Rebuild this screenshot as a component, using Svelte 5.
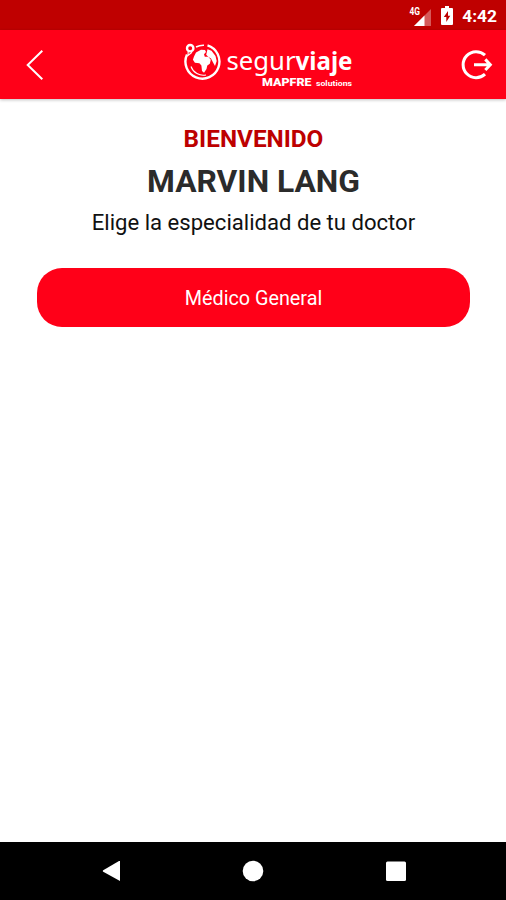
<script>
  export let name = 'MARVIN LANG';
  export let time = '4:42';

  let specialties = ['Médico General'];
</script>

<div class="screen">
  <div class="status">
    <svg class="signal" viewBox="0 0 24 22" aria-hidden="true">
      <path d="M22 3v17H5z" fill="#fff" opacity=".35" />
      <path d="M15.5 9.5V20H5z" fill="#fff" />
      <text x="0.5" y="9" textLength="10.5" lengthAdjust="spacingAndGlyphs">4G</text>
    </svg>
    <svg class="battery" viewBox="0 0 12 19" aria-hidden="true">
      <path d="M4 0h4v2h3q1 0 1 1v15q0 1-1 1H1q-1 0-1-1V3q0-1 1-1h3z" fill="#fff" />
      <path d="M7 5l-4.2 6H5.3v5l4-6.3H7z" fill="#bd0000" />
    </svg>
    <span class="time">{time}</span>
  </div>

  <header class="bar">
    <button class="icon back" aria-label="Volver">
      <svg viewBox="0 0 18 32">
        <path d="M16.3 1.7 1.7 16l14.6 14.3" fill="none" stroke="#fff" stroke-width="2" />
      </svg>
    </button>
    <svg class="logo" viewBox="0 0 172 48" role="img" aria-label="segurviaje">
      <g fill="none" stroke="#fff">
        <path d="M3 11.5A17 17 0 1 0 23.5 2.4" stroke-width="2.4" />
        <path d="M12 4Q16 2 20 2.2" stroke-width="1.4" />
        <circle cx="6.2" cy="5.2" r="3.2" stroke-width="2.4" />
        <path d="M4.2 8.4 4 12.5l4-3.2M7 23.5a13 13 0 0 0 15 8.5" stroke-width="1.1" />
      </g>
      <path d="M10 13.5l2-4 5-2.8 4 .4 1 2-2 2.2.8 2.4h3.5l2.5 3-1 4-2.5 1.8-.8 3.4-2.5 3.8-2-1.8-.6-5.5-2-2.2-4.5-.4-2-3z" fill="#fff" />
      <path d="M23.5 6.2l4 1.5 4 5.2 1.2 5-1.7 5-2.2-4-1.8-3.5-2.6-1.5-2.2-2.2z" fill="#fff" />
      <text class="brand" x="42.5" y="27" textLength="69" lengthAdjust="spacingAndGlyphs">segur</text>
      <text class="brand strong" x="111.5" y="27" textLength="57" lengthAdjust="spacingAndGlyphs">viaje</text>
      <text class="mapfre" x="78" y="43" textLength="49.5" lengthAdjust="spacingAndGlyphs">MAPFRE</text>
      <text class="solutions" x="132" y="43" textLength="36" lengthAdjust="spacingAndGlyphs">solutions</text>
    </svg>
    <button class="icon exit" aria-label="Salir">
      <svg viewBox="0 0 32 32">
        <path d="M24 6.2A13 13 0 1 0 24 25.2" fill="none" stroke="#fff" stroke-width="3" />
        <path d="M13 15.7H29M24.3 10.4l5 5.3-5 5.3" fill="none" stroke="#fff" stroke-width="3" />
      </svg>
    </button>
  </header>

  <main>
    <p class="welcome">BIENVENIDO</p>
    <h1>{name}</h1>
    <p class="hint">Elige la especialidad de tu doctor</p>
    {#each specialties as specialty}
      <button class="specialty">{specialty}</button>
    {/each}
  </main>

  <nav>
    <svg viewBox="0 0 20 22"><path d="M18 1v20L1.2 11.8q-1-.8 0-1.6L17 1z" fill="#fff" /></svg>
    <svg class="home" viewBox="0 0 22 22"><circle cx="11" cy="11" r="10.3" fill="#fff" /></svg>
    <svg viewBox="0 0 20 22"><rect y="1.5" width="20" height="19.5" rx="1.5" fill="#fff" /></svg>
  </nav>
</div>

<style>
  :global(body) {
    background: #fff;
  }
  .screen {
    display: flex;
    flex-direction: column;
    height: 900px;
    font-family: Roboto, "Liberation Sans", sans-serif;
    background: #fff;
  }
  button {
    margin: 0;
    padding: 0;
    border: 0;
    background: none;
    font-family: inherit;
  }
  svg {
    display: block;
  }

  .status {
    display: flex;
    align-items: center;
    justify-content: flex-end;
    box-sizing: border-box;
    height: 30px;
    padding: 1px 9px 0 0;
    background: #bf0000;
    color: #fff;
  }
  .signal {
    width: 24px;
    height: 22px;
    margin: 3px 8px 0 0;
  }
  .signal text {
    font-size: 10px;
    font-weight: 700;
    fill: #fff;
  }
  .battery {
    width: 12px;
    height: 19px;
    margin-right: 9px;
  }
  .time {
    font-size: 17.4px;
    font-weight: 700;
    line-height: 30px;
  }

  .bar {
    display: flex;
    align-items: center;
    justify-content: space-between;
    box-sizing: border-box;
    height: 69px;
    padding: 0 13px 0 26px;
    background: #ff0018;
    box-shadow: 0 1px 3px rgba(0, 0, 0, 0.25);
  }
  .back svg {
    width: 18px;
    height: 32px;
  }
  .exit svg {
    width: 32px;
    height: 32px;
  }
  .logo {
    width: 172px;
    height: 48px;
    margin: 4px 0 0 34px;
  }
  .logo text {
    fill: #fff;
  }
  .brand {
    font-family: "Noto Sans", sans-serif;
    font-size: 25px;
  }
  .strong {
    font-weight: 700;
  }
  .mapfre {
    font-size: 10.5px;
    font-weight: 900;
  }
  .solutions {
    font-size: 8px;
    font-weight: 700;
  }

  main {
    flex: 1;
    display: flex;
    flex-direction: column;
    align-items: center;
    padding: 24px 35px 0 36px;
  }
  p,
  h1 {
    margin: 0;
    white-space: nowrap;
  }
  .welcome {
    color: #bd0000;
    font-size: 24.3px;
    font-weight: 700;
    line-height: 32px;
  }
  h1 {
    margin-top: 6px;
    color: #2b2b2b;
    font-size: 31.8px;
    font-weight: 700;
    line-height: 40px;
  }
  .hint {
    margin-top: 6px;
    color: #111;
    font-size: 22.1px;
    line-height: 30px;
  }
  .specialty {
    width: 433px;
    height: 59px;
    margin-top: 31px;
    padding-top: 3px;
    border-radius: 25px;
    background: #ff0018;
    color: #fff;
    font-size: 19.8px;
    line-height: 56px;
  }

  nav {
    display: flex;
    align-items: center;
    justify-content: space-between;
    box-sizing: border-box;
    height: 58px;
    padding: 0 100px 0 102px;
    background: #000;
  }
  nav svg {
    height: 22px;
  }
  .home {
    margin-right: 2px;
  }
</style>
